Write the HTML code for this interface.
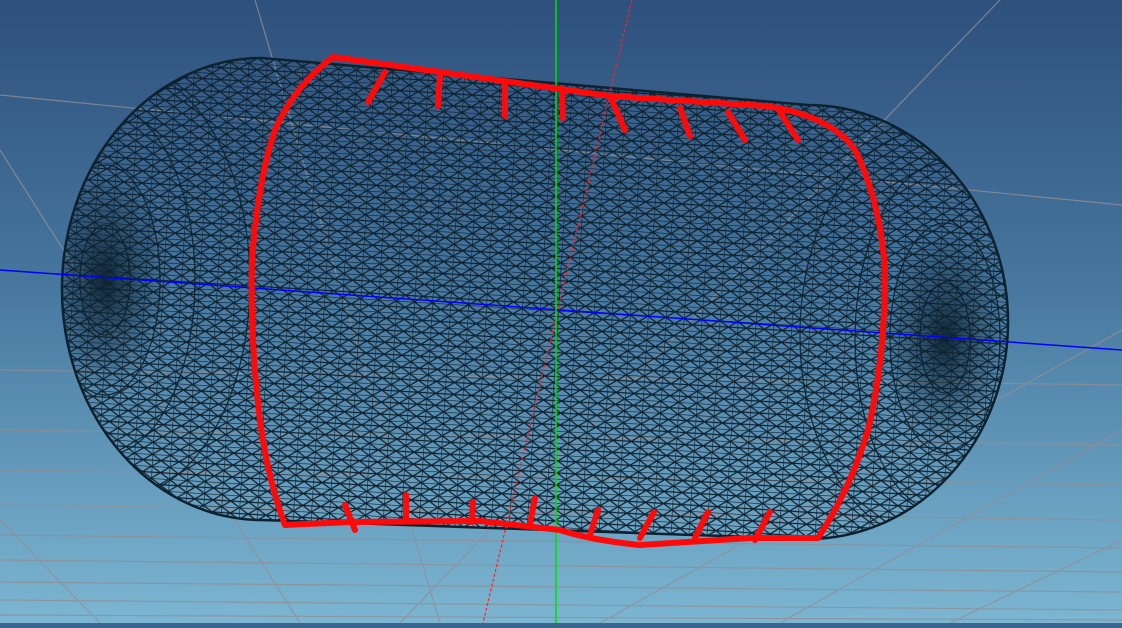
<!DOCTYPE html>
<html><head><meta charset="utf-8"><style>html,body{margin:0;padding:0;overflow:hidden;background:#3b6690}</style></head>
<body>
<svg width="1122" height="623" viewBox="0 0 1122 623" xmlns="http://www.w3.org/2000/svg">
<defs>
<linearGradient id="bg" x1="0" y1="0" x2="0" y2="1">
<stop offset="0" stop-color="#2e507c"/><stop offset="0.45" stop-color="#46769e"/><stop offset="1" stop-color="#7cb6d2"/>
</linearGradient>
<pattern id="mesh" width="18" height="12" patternUnits="userSpaceOnUse" patternTransform="rotate(3.5)">
<path d="M0 0V12M0 0H18M0 6H18M0 0L18 12M18 0L0 12" stroke="#0d2230" stroke-width="1.3" fill="none" opacity="1"/>
</pattern>
<radialGradient id="pole" cx="0.5" cy="0.5" r="0.5">
<stop offset="0" stop-color="#0d2230" stop-opacity="0.95"/><stop offset="0.35" stop-color="#0d2230" stop-opacity="0.55"/><stop offset="1" stop-color="#0d2230" stop-opacity="0"/>
</radialGradient>
<clipPath id="cap"><path id="capp" d="M262 58 L808 105 A200 217 0 0 1 808 539 L262 520 A200 231 0 0 1 262 58 Z"/></clipPath>
</defs>
<rect width="1122" height="623" fill="url(#bg)"/>
<g stroke="#8f8f95" stroke-width="1.2" opacity="0.8">
<line x1="0" y1="430" x2="1122" y2="445"/><line x1="0" y1="470" x2="1122" y2="485"/>
<line x1="0" y1="505" x2="1122" y2="520"/><line x1="0" y1="535" x2="1122" y2="548"/>
<line x1="0" y1="560" x2="1122" y2="572"/><line x1="0" y1="582" x2="1122" y2="592"/>
<line x1="0" y1="600" x2="1122" y2="610"/><line x1="0" y1="615" x2="1122" y2="620"/>
<line x1="0" y1="370" x2="1122" y2="385"/><line x1="0" y1="95" x2="1122" y2="205"/>
<line x1="255" y1="0" x2="440" y2="623"/><line x1="600" y1="623" x2="1122" y2="330"/>
<line x1="780" y1="623" x2="1122" y2="430"/><line x1="400" y1="623" x2="1000" y2="0"/>
<line x1="0" y1="150" x2="300" y2="623"/><line x1="100" y1="623" x2="0" y2="520"/>
<line x1="950" y1="623" x2="1122" y2="540"/>
</g>
<g clip-path="url(#cap)">
<rect width="1122" height="623" fill="url(#mesh)"/>
<g fill="none" stroke="#0d2230" stroke-width="1.3" opacity="0.9">
<ellipse cx="105" cy="280" rx="25" ry="55"/><ellipse cx="105" cy="280" rx="55" ry="115"/><ellipse cx="105" cy="280" rx="90" ry="175"/><ellipse cx="120" cy="282" rx="130" ry="215"/>
<ellipse cx="945" cy="338" rx="25" ry="55"/><ellipse cx="945" cy="338" rx="55" ry="115"/><ellipse cx="945" cy="338" rx="90" ry="175"/><ellipse cx="930" cy="335" rx="130" ry="205"/>
</g>
<ellipse cx="105" cy="280" rx="60" ry="110" fill="url(#pole)"/>
<ellipse cx="945" cy="338" rx="60" ry="110" fill="url(#pole)"/>
</g>
<use href="#capp" fill="none" stroke="#0d2230" stroke-width="2.5"/>
<line x1="0" y1="270" x2="1122" y2="350" stroke="#0000ff" stroke-width="1.5"/>
<line x1="632" y1="0" x2="483" y2="623" stroke="#ff2020" stroke-width="1.2" stroke-dasharray="3 2"/>
<line x1="556" y1="0" x2="556" y2="623" stroke="#00e000" stroke-width="1.5"/>
<g fill="none" stroke="#ff0a0a" stroke-width="6" stroke-linecap="round" stroke-linejoin="round">
<path d="M333 57 L440 72 L610 96 L765 106 Q830 115 855 150 Q880 200 885 270 Q885 360 868 430 Q850 490 818 538 L750 538 L640 545 Q590 540 560 530 L480 521 L350 522 L285 525 Q268 480 260 420 Q250 340 252 260 Q258 180 275 130 Q295 85 333 57"/>
<path d="M385 72 L368 102M440 75 L438 106M505 85 L505 116M562 90 L563 118M610 96 L625 130M680 108 L690 136M728 112 L745 140M780 112 L798 140"/>
<path d="M345 505 L355 530M406 495 L406 520M473 502 L472 522M535 498 L530 524M598 510 L590 535M654 512 L640 538M708 512 L695 538M770 512 L755 540"/>
</g>
</svg>
</body></html>
